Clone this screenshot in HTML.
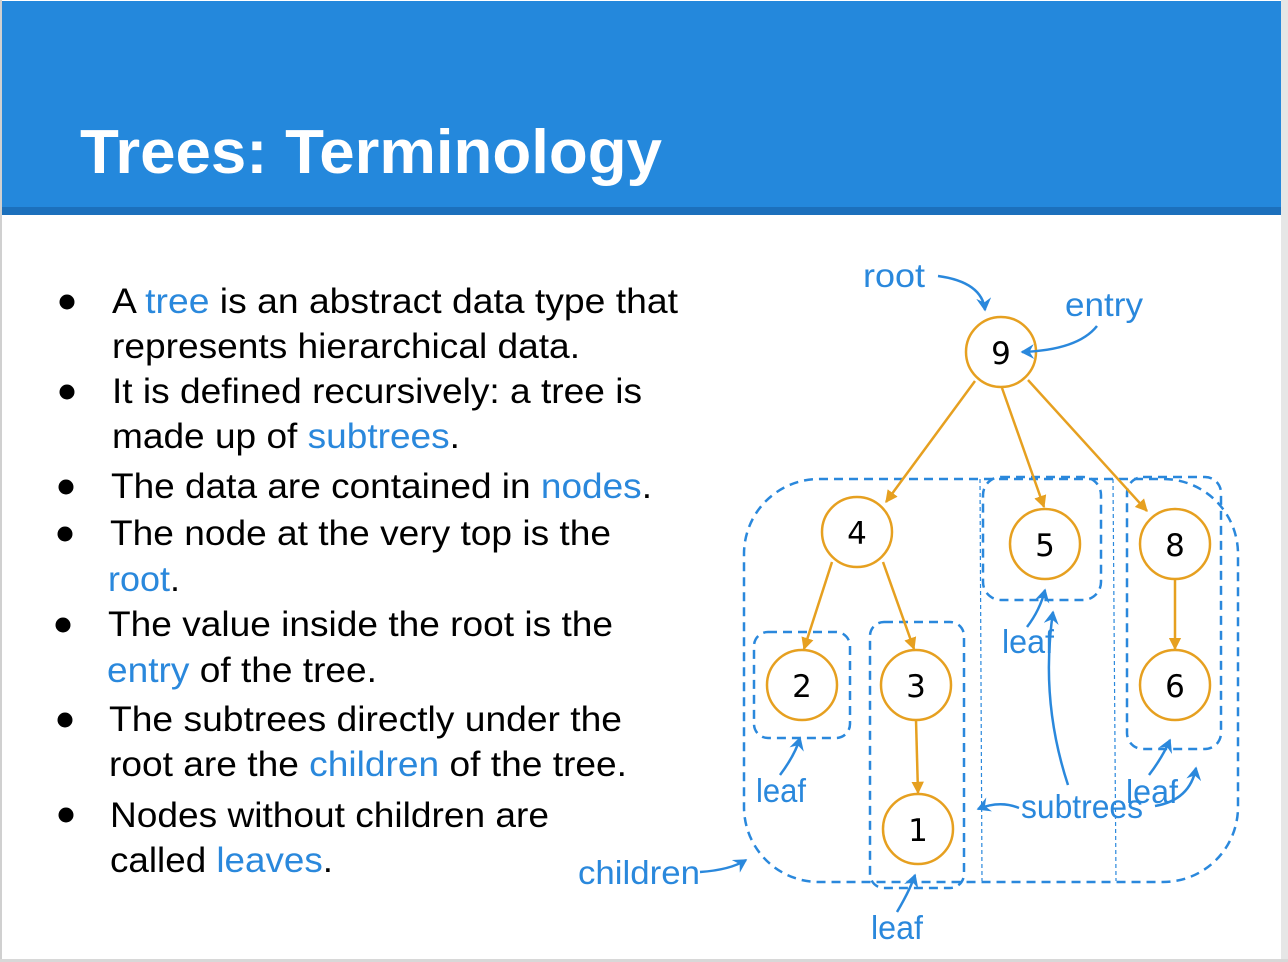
<!DOCTYPE html>
<html><head><meta charset="utf-8"><style>
html,body{margin:0;padding:0;background:#fff;}
svg{display:block;}
text{font-family:"Liberation Sans",Arial,sans-serif;}
</style></head><body>
<svg width="1288" height="962" viewBox="0 0 1288 962" xmlns="http://www.w3.org/2000/svg">
<defs>
<marker id="oa" viewBox="0 0 10 10" refX="9" refY="5" markerWidth="5" markerHeight="5" orient="auto" markerUnits="strokeWidth">
<path d="M0,0 L10,5 L0,10 z" fill="#e6a020"/></marker>
<marker id="ba" viewBox="0 0 10 10" refX="8" refY="5" markerWidth="6" markerHeight="6" orient="auto" markerUnits="strokeWidth">
<path d="M0,0 L9,5 L0,10 L3,5 z" fill="#2a88dc"/></marker>
</defs>
<rect x="0" y="0" width="1288" height="962" fill="#fff"/>
<rect x="0" y="0" width="2" height="962" fill="#d0d0d0"/>
<rect x="1281" y="0" width="7" height="962" fill="#e6e6e6"/>
<rect x="0" y="959" width="1288" height="3" fill="#d8d8d8"/>
<rect x="2" y="1" width="1279" height="207" fill="#2488dc"/>
<rect x="2" y="207" width="1279" height="8" fill="#1c70bc"/>
<text x="80" y="173" font-size="62" font-weight="bold" fill="#fff" textLength="582" lengthAdjust="spacingAndGlyphs">Trees: Terminology</text>

<g font-size="35" fill="#000">
<g fill="#000">
<circle cx="67" cy="302" r="7.5"/><circle cx="67" cy="392" r="7.5"/><circle cx="66" cy="487" r="7.5"/><circle cx="65" cy="534" r="7.5"/><circle cx="63" cy="625" r="7.5"/><circle cx="65" cy="720" r="7.5"/><circle cx="66" cy="815" r="7.5"/>
</g>
<text x="112" y="313" textLength="566" lengthAdjust="spacingAndGlyphs">A <tspan fill="#2a88dc">tree</tspan> is an abstract data type that</text>
<text x="112" y="358" textLength="468" lengthAdjust="spacingAndGlyphs">represents hierarchical data.</text>
<text x="112" y="403" textLength="530" lengthAdjust="spacingAndGlyphs">It is defined recursively: a tree is</text>
<text x="112" y="448" textLength="348" lengthAdjust="spacingAndGlyphs">made up of <tspan fill="#2a88dc">subtrees</tspan>.</text>
<text x="111" y="498" textLength="541" lengthAdjust="spacingAndGlyphs">The data are contained in <tspan fill="#2a88dc">nodes</tspan>.</text>
<text x="110" y="545" textLength="501" lengthAdjust="spacingAndGlyphs">The node at the very top is the</text>
<text x="108" y="591" textLength="72" lengthAdjust="spacingAndGlyphs"><tspan fill="#2a88dc">root</tspan>.</text>
<text x="108" y="636" textLength="505" lengthAdjust="spacingAndGlyphs">The value inside the root is the</text>
<text x="107" y="682" textLength="270" lengthAdjust="spacingAndGlyphs"><tspan fill="#2a88dc">entry</tspan> of the tree.</text>
<text x="109" y="731" textLength="513" lengthAdjust="spacingAndGlyphs">The subtrees directly under the</text>
<text x="109" y="776" textLength="518" lengthAdjust="spacingAndGlyphs">root are the <tspan fill="#2a88dc">children</tspan> of the tree.</text>
<text x="110" y="827" textLength="439" lengthAdjust="spacingAndGlyphs">Nodes without children are</text>
<text x="110" y="872" textLength="223" lengthAdjust="spacingAndGlyphs">called <tspan fill="#2a88dc">leaves</tspan>.</text>
</g>

<g fill="none" stroke="#2a88dc" stroke-width="2.5" stroke-dasharray="9,6">
<rect x="744" y="479" width="494" height="403" rx="75"/>
<rect x="754" y="632" width="96" height="106" rx="14"/>
<rect x="870" y="622" width="94" height="266" rx="14"/>
<rect x="983" y="477" width="118" height="123" rx="18"/>
<rect x="1127" y="477" width="94" height="272" rx="16"/>
</g>
<g stroke="#2a88dc" stroke-width="1.2" stroke-dasharray="4,3">
<line x1="980" y1="479" x2="982" y2="881"/>
<line x1="1113" y1="479" x2="1116" y2="881"/>
</g>

<g stroke="#e6a020" stroke-width="2.5" fill="none" marker-end="url(#oa)">
<line x1="975" y1="381" x2="886" y2="502"/>
<line x1="1002" y1="388" x2="1044" y2="507"/>
<line x1="1028" y1="380" x2="1147" y2="511"/>
<line x1="832" y1="562" x2="804" y2="649"/>
<line x1="883" y1="562" x2="914" y2="649"/>
<line x1="916" y1="720" x2="918" y2="793"/>
<line x1="1175" y1="580" x2="1175" y2="649"/>
</g>
<g fill="#fff" stroke="#e6a020" stroke-width="2.5">
<circle cx="1001" cy="352" r="35"/>
<circle cx="857" cy="532" r="35"/>
<circle cx="1045" cy="544" r="35"/>
<circle cx="1175" cy="544" r="35"/>
<circle cx="802" cy="685" r="35"/>
<circle cx="916" cy="685" r="35"/>
<circle cx="918" cy="829" r="35"/>
<circle cx="1175" cy="685" r="35"/>
</g>
<g font-size="31" fill="#000" text-anchor="middle">
<text x="1001" y="364" style="font-family:'DejaVu Sans',sans-serif">9</text>
<text x="857" y="544" style="font-family:'DejaVu Sans',sans-serif">4</text>
<text x="1045" y="556" style="font-family:'DejaVu Sans',sans-serif">5</text>
<text x="1175" y="556" style="font-family:'DejaVu Sans',sans-serif">8</text>
<text x="802" y="697" style="font-family:'DejaVu Sans',sans-serif">2</text>
<text x="916" y="697" style="font-family:'DejaVu Sans',sans-serif">3</text>
<text x="918" y="841" style="font-family:'DejaVu Sans',sans-serif">1</text>
<text x="1175" y="697" style="font-family:'DejaVu Sans',sans-serif">6</text>
</g>

<g fill="none" stroke="#2a88dc" stroke-width="2.5" marker-end="url(#ba)">
<path d="M938,276 Q982,282 985,310"/>
<path d="M1097,326 Q1078,350 1022,352"/>
<path d="M780,775 Q795,755 800,738"/>
<path d="M1027,627 Q1040,610 1045,590"/>
<path d="M897,912 Q910,890 915,875"/>
<path d="M1149,775 Q1162,758 1170,740"/>
<path d="M1155,806 Q1190,800 1196,768"/>
<path d="M1019,808 Q1000,800 978,809"/>
<path d="M1068,785 Q1040,700 1053,612"/>
<path d="M700,872 Q730,870 746,860"/>
</g>
<g font-size="33" fill="#2a88dc">
<text x="863" y="287" textLength="62" lengthAdjust="spacingAndGlyphs">root</text>
<text x="1065" y="316" textLength="78" lengthAdjust="spacingAndGlyphs">entry</text>
<text x="756" y="802" textLength="50" lengthAdjust="spacingAndGlyphs">leaf</text>
<text x="1002" y="653" textLength="52" lengthAdjust="spacingAndGlyphs">leaf</text>
<text x="871" y="939" textLength="52" lengthAdjust="spacingAndGlyphs">leaf</text>
<text x="1126" y="803" textLength="52" lengthAdjust="spacingAndGlyphs">leaf</text>
<text x="1021" y="818" textLength="122" lengthAdjust="spacingAndGlyphs">subtrees</text>
<text x="578" y="884" textLength="122" lengthAdjust="spacingAndGlyphs">children</text>
</g>
</svg>
</body></html>
